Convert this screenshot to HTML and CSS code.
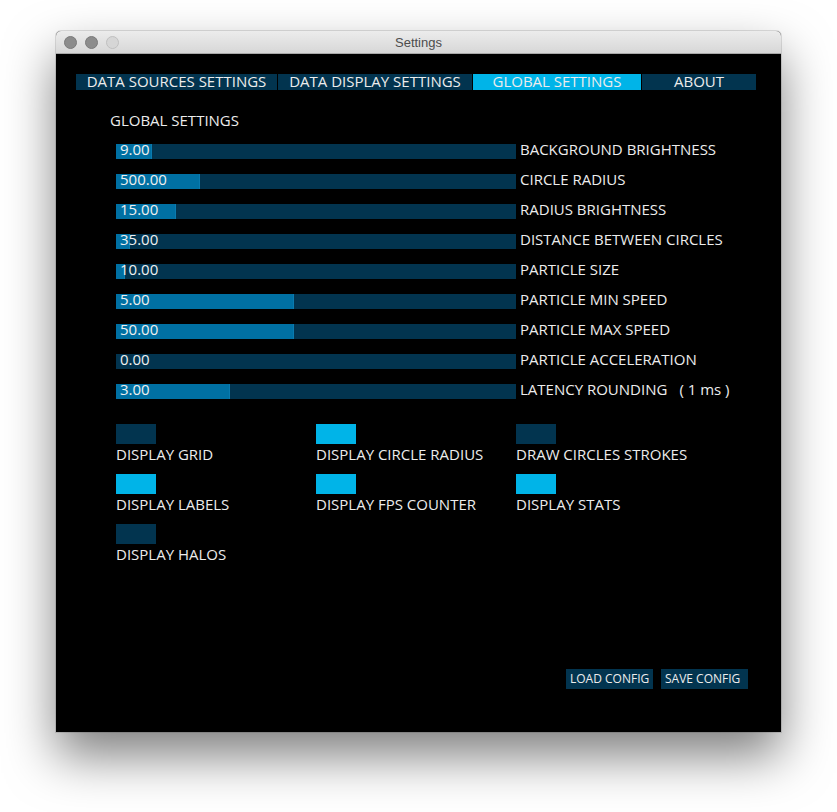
FILE: index.html
```html
<!DOCTYPE html>
<html>
<head>
<meta charset="utf-8">
<link rel="stylesheet" href="styles.css">
</head>
<body>
<div class="stage">
  <div class="window">
    <div class="titlebar">
      <div class="lights">
        <span class="light"></span>
        <span class="light"></span>
        <span class="light off"></span>
      </div>
      <div class="title">Settings</div>
    </div>
    <div class="content">
      <div class="tabs">
        <div class="tab t1">DATA SOURCES SETTINGS</div>
        <div class="tab t2">DATA DISPLAY SETTINGS</div>
        <div class="tab t3 active">GLOBAL SETTINGS</div>
        <div class="tab t4">ABOUT</div>
      </div>
      <div class="section-title">GLOBAL SETTINGS</div>
      <div class="sliders">
        <div class="slider-row"><div class="track"><div class="fill" style="width:36px"></div><span class="value">9.00</span></div><span class="slabel">BACKGROUND BRIGHTNESS</span></div>
        <div class="slider-row"><div class="track"><div class="fill" style="width:84px"></div><span class="value">500.00</span></div><span class="slabel">CIRCLE RADIUS</span></div>
        <div class="slider-row"><div class="track"><div class="fill" style="width:60px"></div><span class="value">15.00</span></div><span class="slabel">RADIUS BRIGHTNESS</span></div>
        <div class="slider-row"><div class="track"><div class="fill" style="width:14px"></div><span class="value">35.00</span></div><span class="slabel">DISTANCE BETWEEN CIRCLES</span></div>
        <div class="slider-row"><div class="track"><div class="fill" style="width:9px"></div><span class="value">10.00</span></div><span class="slabel">PARTICLE SIZE</span></div>
        <div class="slider-row"><div class="track"><div class="fill" style="width:178px"></div><span class="value">5.00</span></div><span class="slabel">PARTICLE MIN SPEED</span></div>
        <div class="slider-row"><div class="track"><div class="fill" style="width:178px"></div><span class="value">50.00</span></div><span class="slabel">PARTICLE MAX SPEED</span></div>
        <div class="slider-row"><div class="track"><div class="fill" style="width:0px"></div><span class="value">0.00</span></div><span class="slabel">PARTICLE ACCELERATION</span></div>
        <div class="slider-row"><div class="track"><div class="fill" style="width:114px"></div><span class="value">3.00</span></div><span class="slabel">LATENCY ROUNDING</span><span class="unit">( 1 ms )</span></div>
      </div>
      <div class="toggles">
        <div class="toggle"><div class="box"></div><div class="tlabel">DISPLAY GRID</div></div>
        <div class="toggle"><div class="box on"></div><div class="tlabel">DISPLAY CIRCLE RADIUS</div></div>
        <div class="toggle"><div class="box"></div><div class="tlabel">DRAW CIRCLES STROKES</div></div>
        <div class="toggle"><div class="box on"></div><div class="tlabel">DISPLAY LABELS</div></div>
        <div class="toggle"><div class="box on"></div><div class="tlabel">DISPLAY FPS COUNTER</div></div>
        <div class="toggle"><div class="box on"></div><div class="tlabel">DISPLAY STATS</div></div>
        <div class="toggle"><div class="box"></div><div class="tlabel">DISPLAY HALOS</div></div>
      </div>
      <div class="buttons">
        <div class="btn">LOAD CONFIG</div>
        <div class="btn">SAVE CONFIG</div>
      </div>
    </div>
  </div>
</div>
</body>
</html>
```
FILE: styles.css
```css
html, body {
  margin: 0;
  padding: 0;
  background: #ffffff;
}
.stage {
  padding: 31px 0 0 56px;
  height: 812px;
  box-sizing: border-box;
  overflow: hidden;
}
.window {
  width: 725px;
  height: 701px;
  border-radius: 5px 5px 0 0;
  overflow: hidden;
  box-shadow: 0 24px 50px rgba(0, 0, 0, 0.5), 0 0 0 1px rgba(0, 0, 0, 0.12);
  display: flex;
  flex-direction: column;
  background: #000;
}
.titlebar {
  height: 22px;
  flex: none;
  border-bottom: 1px solid #a9a9a9;
  background: linear-gradient(#ececec, #d7d7d7);
  position: relative;
  display: flex;
  align-items: center;
}
.lights {
  display: flex;
  gap: 8px;
  padding-left: 8px;
  padding-top: 1px;
}
.light {
  width: 11px;
  height: 11px;
  border-radius: 50%;
  background: #8c8c8c;
  border: 0.5px solid #7a7a7a;
}
.light.off {
  background: #d6d6d6;
  border-color: #bfbfbf;
}
.title {
  position: absolute;
  left: 0;
  right: 0;
  top: 0;
  text-align: center;
  font-family: "Liberation Sans", Arial, sans-serif;
  font-size: 13px;
  line-height: 23px;
  color: #4d4d4d;
}
.content {
  flex: 1;
  background: #000;
  display: flex;
  flex-direction: column;
  padding: 20px 0 43px 20px;
  font-family: "Open Sans", "Noto Sans", sans-serif;
  color: #ececec;
}
.tabs {
  display: flex;
  gap: 1px;
}
.tab {
  height: 16px;
  background: #02344f;
  font-size: 15px;
  line-height: 14px;
  text-align: center;
  color: #ececec;
  white-space: nowrap;
}
.tab.active {
  background: #00b4e8;
}
.t1 { width: 201px; }
.t2 { width: 194px; }
.t3 { width: 168px; }
.t4 { width: 114px; }
.section-title {
  margin: 22px 0 0 34px;
  font-size: 15px;
  line-height: 16px;
}
.sliders {
  margin: 16px 0 0 40px;
  display: flex;
  flex-direction: column;
  gap: 15px;
}
.slider-row {
  display: flex;
  align-items: flex-start;
  height: 15px;
  white-space: nowrap;
}
.track {
  position: relative;
  width: 400px;
  height: 15px;
  background: #02344f;
  flex: none;
}
.fill {
  height: 15px;
  background: #0070a3;
  box-shadow: inset -1px 0 0 #0a7bb0;
}
.value {
  position: absolute;
  left: 4px;
  top: 0;
  font-size: 15px;
  line-height: 10px;
  color: #f0f0f0;
}
.slabel {
  margin-left: 4px;
  font-size: 15px;
  line-height: 10px;
}
.unit {
  margin-left: 12px;
  font-size: 15px;
  line-height: 10px;
}
.toggles {
  margin: 25px 0 0 40px;
  display: grid;
  grid-template-columns: 200px 200px 200px;
  row-gap: 11px;
}
.box {
  width: 40px;
  height: 20px;
  background: #02344f;
}
.box.on {
  background: #00b4e8;
}
.tlabel {
  margin-top: 2px;
  margin-bottom: 1px;
  font-size: 15px;
  line-height: 16px;
  white-space: nowrap;
}
.buttons {
  margin-top: auto;
  align-self: flex-end;
  margin-right: 33px;
  display: flex;
  gap: 8px;
}
.btn {
  width: 83px;
  height: 20px;
  padding-left: 4px;
  background: #02344f;
  font-size: 12px;
  line-height: 19px;
  color: #ececec;
  white-space: nowrap;
}
```
